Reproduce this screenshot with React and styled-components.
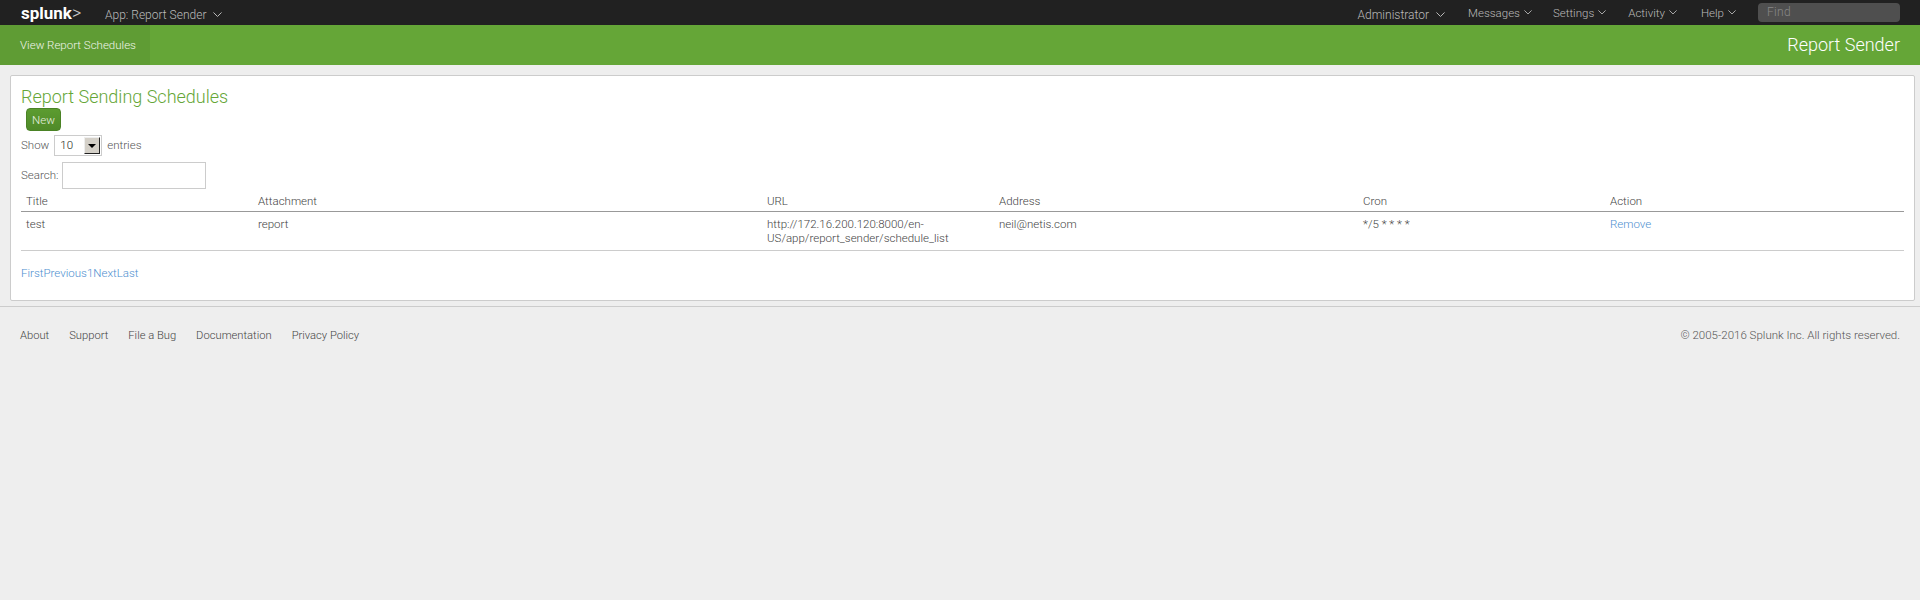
import React from 'react';
import styled, { createGlobalStyle } from 'styled-components';

const GlobalStyle = createGlobalStyle`
  html, body { margin: 0; padding: 0; height: 100%; background: #eee; }
  body {
    font-family: Roboto, "Liberation Sans", sans-serif;
    font-weight: 300;
    font-size: 11.5px;
    line-height: 14px;
    color: #333;
  }
`;

const TopBar = styled.div`
  height: 25px;
  background: #212121;
  display: flex;
  align-items: center;
  color: #bbb;
  padding: 0 20px 0 21px;
`;

const Logo = styled.div`
  width: 84px;
  color: #fff;
  font-weight: 700;
  font-size: 17px;
  line-height: 25px;
  span { font-weight: 300; color: #ccc; font-size: 18px; }
`;

const AppMenu = styled.div`
  display: flex;
  align-items: center;
  gap: 7px;
  font-size: 12px;
  padding-top: 4px;
`;

const Spacer = styled.div`
  flex: 1;
`;

const MenuItem = styled.div`
  display: flex;
  align-items: center;
  gap: ${p => p.$gap || 4}px;
  margin-left: ${p => p.$left || 0}px;
  padding-top: ${p => p.$drop || 0}px;
  font-size: ${p => p.$size || 11.5}px;
`;

const Find = styled.div`
  width: 142px;
  height: 19px;
  margin-left: 22px;
  box-sizing: border-box;
  padding-left: 9px;
  background: #4f4f4f;
  border-radius: 4px;
  color: #888;
  font-size: 12px;
  line-height: 19px;
  letter-spacing: 0.3px;
`;

const AppBar = styled.div`
  height: 40px;
  background: #65a637;
  display: flex;
  align-items: center;
  justify-content: space-between;
  color: #fff;
`;

const NavTab = styled.div`
  height: 40px;
  width: 150px;
  box-sizing: border-box;
  padding-left: 20px;
  background: #5f9c34;
  color: #f0f5ea;
  line-height: 40px;
`;

const AppTitle = styled.div`
  font-size: 18px;
  margin-right: 20px;
`;

const Panel = styled.div`
  margin: 10px 5px 0 10px;
  height: 226px;
  box-sizing: border-box;
  background: #fff;
  border: 1px solid #ccc;
  border-radius: 2px;
  padding: 10px;
`;

const Heading = styled.h2`
  margin: 0;
  font-size: 18px;
  font-weight: 300;
  line-height: 22px;
  color: #65a637;
`;

const NewButton = styled.button`
  display: block;
  margin: 0 0 0 5px;
  width: 35px;
  height: 23px;
  padding: 0;
  font: inherit;
  color: #e8f0e0;
  background: linear-gradient(#5c9c30, #4f8a29);
  border: 1px solid #4a8225;
  border-radius: 4px;
`;

const Line = styled.div`
  display: flex;
  align-items: center;
  gap: ${p => p.$gap}px;
  height: ${p => p.$height}px;
  margin-top: ${p => p.$top}px;
  color: #555;
`;

const Label = styled.span`
  margin-bottom: 2px;
`;

const SelectBox = styled.div`
  width: 48px;
  height: 21px;
  box-sizing: border-box;
  border: 1px solid #ccc;
  display: flex;
  justify-content: space-between;
  padding: 1px 1px 1px 5px;
  color: #222;
  line-height: 17px;
`;

const SelectArrow = styled.div`
  width: 16px;
  height: 17px;
  box-sizing: border-box;
  background: #d4d0c8;
  border: 1px solid;
  border-color: #eee #222 #222 #eee;
  display: flex;
  align-items: center;
  justify-content: center;
  &::after {
    content: '';
    border: 4px solid transparent;
    border-top: 4px solid #000;
    border-bottom: 0;
  }
`;

const SearchInput = styled.div`
  width: 144px;
  height: 27px;
  box-sizing: border-box;
  border: 1px solid #ccc;
`;

const Table = styled.table`
  width: 1883px;
  table-layout: fixed;
  border-collapse: collapse;
`;

const Head = styled.th`
  width: ${p => p.$width}px;
  height: 22px;
  box-sizing: border-box;
  padding: 2px 5px 0;
  text-align: left;
  font-weight: 300;
  color: #444;
  border-bottom: 1px solid #999;
`;

const Cell = styled.td`
  padding: 5px;
  vertical-align: top;
  color: #444;
  border-bottom: 1px solid #ccc;
`;

const Link = styled.a`
  color: #4e8fcf;
`;

const Pager = styled.div`
  margin-top: 15px;
`;

const Footer = styled.div`
  margin-top: 5px;
  border-top: 1px solid #ccc;
  padding: 21px 20px 0;
  display: flex;
  align-items: baseline;
  color: #444;
`;

const FooterLink = styled.span`
  margin-right: 20px;
  font-size: 11.2px;
`;

const Copyright = styled.span`
  margin-left: auto;
  color: #555;
`;

function Chevron({ size = 8 }) {
  return (
    <svg width={size} height={size * 0.6} viewBox="0 0 10 6" fill="none" stroke="currentColor" strokeWidth="1.1">
      <path d="M0.5 0.5 L5 5 L9.5 0.5" />
    </svg>
  );
}

const columns = [
  ['Title', 232],
  ['Attachment', 509],
  ['URL', 232],
  ['Address', 364],
  ['Cron', 247],
  ['Action', 299],
];

export default function App() {
  return (
    <>
      <GlobalStyle />
      <TopBar>
        <Logo>splunk<span>&gt;</span></Logo>
        <AppMenu>App: Report Sender <Chevron size={9} /></AppMenu>
        <Spacer />
        <MenuItem $gap={7} $drop={4} $size={12}>Administrator <Chevron size={9} /></MenuItem>
        <MenuItem $left={23}>Messages <Chevron /></MenuItem>
        <MenuItem $left={21}>Settings <Chevron /></MenuItem>
        <MenuItem $left={22}>Activity <Chevron /></MenuItem>
        <MenuItem $left={24}>Help <Chevron /></MenuItem>
        <Find>Find</Find>
      </TopBar>
      <AppBar>
        <NavTab>View Report Schedules</NavTab>
        <AppTitle>Report Sender</AppTitle>
      </AppBar>
      <Panel>
        <Heading>Report Sending Schedules</Heading>
        <NewButton>New</NewButton>
        <Line $gap={5} $height={21} $top={4}>
          <Label>Show</Label>
          <SelectBox>10<SelectArrow /></SelectBox>
          <Label>entries</Label>
        </Line>
        <Line $gap={4} $height={27} $top={6}>
          <Label>Search:</Label>
          <SearchInput />
        </Line>
        <Table>
          <thead>
            <tr>
              {columns.map(([name, width]) => (
                <Head key={name} $width={width}>{name}</Head>
              ))}
            </tr>
          </thead>
          <tbody>
            <tr>
              <Cell>test</Cell>
              <Cell>report</Cell>
              <Cell>http://172.16.200.120:8000/en-US/app/report_sender/schedule_list</Cell>
              <Cell>neil@netis.com</Cell>
              <Cell>*/5 * * * *</Cell>
              <Cell><Link>Remove</Link></Cell>
            </tr>
          </tbody>
        </Table>
        <Pager>
          <Link>First</Link><Link>Previous</Link><Link>1</Link><Link>Next</Link><Link>Last</Link>
        </Pager>
      </Panel>
      <Footer>
        <FooterLink>About</FooterLink>
        <FooterLink>Support</FooterLink>
        <FooterLink>File a Bug</FooterLink>
        <FooterLink>Documentation</FooterLink>
        <FooterLink>Privacy Policy</FooterLink>
        <Copyright>© 2005-2016 Splunk Inc. All rights reserved.</Copyright>
      </Footer>
    </>
  );
}
